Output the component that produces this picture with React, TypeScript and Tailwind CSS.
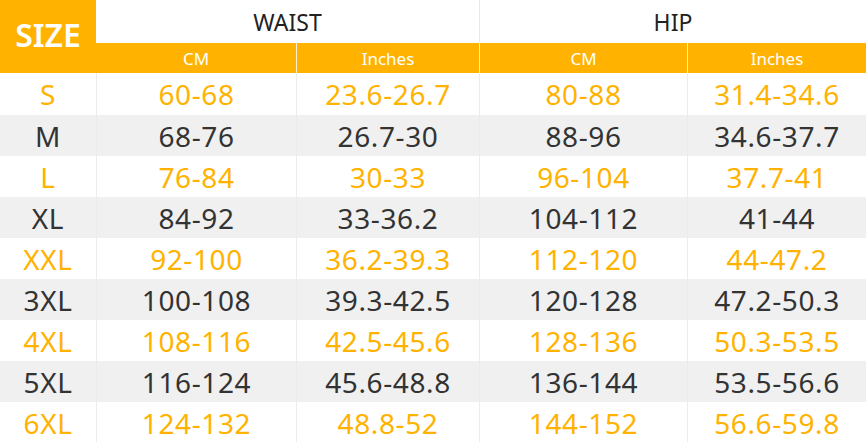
const rows = [
  ["S", "60-68", "23.6-26.7", "80-88", "31.4-34.6"],
  ["M", "68-76", "26.7-30", "88-96", "34.6-37.7"],
  ["L", "76-84", "30-33", "96-104", "37.7-41"],
  ["XL", "84-92", "33-36.2", "104-112", "41-44"],
  ["XXL", "92-100", "36.2-39.3", "112-120", "44-47.2"],
  ["3XL", "100-108", "39.3-42.5", "120-128", "47.2-50.3"],
  ["4XL", "108-116", "42.5-45.6", "128-136", "50.3-53.5"],
  ["5XL", "116-124", "45.6-48.8", "136-144", "53.5-56.6"],
  ["6XL", "124-132", "48.8-52", "144-152", "56.6-59.8"],
];

export default function App() {
  return (
    <div
      style={{ fontFamily: "'Noto Sans', 'Open Sans', sans-serif" }}
      className="w-[866px] h-[442px] overflow-hidden bg-white"
    >
      <div className="grid grid-cols-[96px_200px_183px_208px_179px] grid-rows-[43px_30px]">
        <div className="row-span-2 bg-[#ffb300] flex items-start justify-center pt-[19px] text-white text-[32px] font-semibold leading-none">
          SIZE
        </div>
        <div className="col-span-2 flex items-center justify-center text-[23px] text-[#222] leading-none pt-[1px]">
          WAIST
        </div>
        <div className="col-span-2 border-l border-[#e8e8e8] flex items-center justify-center text-[23px] text-[#222] leading-none pt-[1px]">
          HIP
        </div>
        <div className="bg-[#ffb300] flex items-center justify-center text-white text-[17px] leading-none">
          CM
        </div>
        <div className="bg-[#ffb300] border-l border-[#fff1cc] flex items-center justify-center text-white text-[17px] leading-none">
          Inches
        </div>
        <div className="bg-[#ffb300] border-l border-[#fff1cc] flex items-center justify-center text-white text-[17px] leading-none">
          CM
        </div>
        <div className="bg-[#ffb300] border-l border-[#fff1cc] flex items-center justify-center text-white text-[17px] leading-none">
          Inches
        </div>
      </div>
      {rows.map((r, i) => (
        <div
          key={r[0]}
          className={`grid grid-cols-[96px_200px_183px_208px_179px] text-[28px] tracking-[0.6px] leading-none ${
            i === 0 ? "h-[42px]" : "h-[41px]"
          } ${i % 2 === 0 ? "bg-white text-[#ffb300]" : "bg-[#f0f0f0] text-[#333]"}`}
        >
          {r.map((c, j) => (
            <div
              key={j}
              className={`flex items-center justify-center ${j > 0 ? "border-l border-[#ececec]" : ""}`}
            >
              {c}
            </div>
          ))}
        </div>
      ))}
    </div>
  );
}
